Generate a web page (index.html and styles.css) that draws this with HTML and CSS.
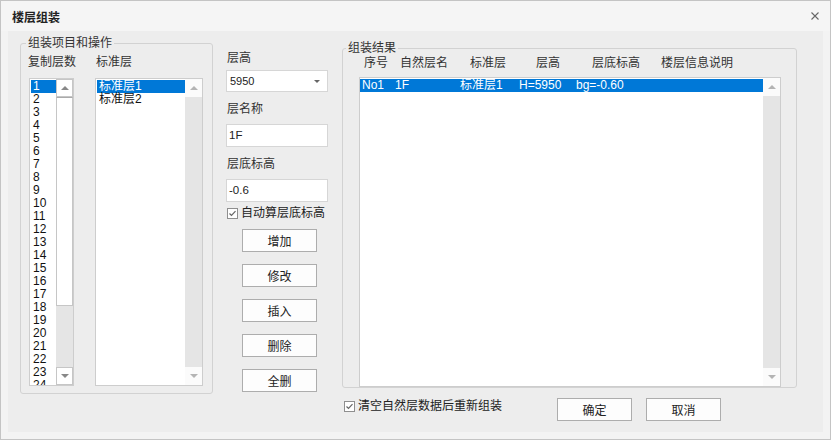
FILE: index.html
```html
<!DOCTYPE html>
<html lang="zh-CN">
<head>
<meta charset="UTF-8">
<title>楼层组装</title>
<link rel="stylesheet" href="styles.css">
</head>
<body>
<div class="dialog">
    <div class="titlebar">
        <span class="title">楼层组装</span>
        <svg class="close" width="8" height="8" viewBox="0 0 8 8"><path d="M0.5 0.5L7.5 7.5M7.5 0.5L0.5 7.5" stroke="#666" stroke-width="1.1" fill="none"/></svg>
    </div>

    <div class="panel">
        <div class="top">
            <!-- gruppo sinistro -->
            <div class="group group-left">
                <span class="legend">组装项目和操作</span>
                <div class="col-labels">
                    <span class="lab-num">复制层数</span>
                    <span>标准层</span>
                </div>
                <div class="lists">
                    <div class="listbox list-num">
                        <div class="items">
                            <div class="item sel">1</div>
                            <div class="item">2</div>
                            <div class="item">3</div>
                            <div class="item">4</div>
                            <div class="item">5</div>
                            <div class="item">6</div>
                            <div class="item">7</div>
                            <div class="item">8</div>
                            <div class="item">9</div>
                            <div class="item">10</div>
                            <div class="item">11</div>
                            <div class="item">12</div>
                            <div class="item">13</div>
                            <div class="item">14</div>
                            <div class="item">15</div>
                            <div class="item">16</div>
                            <div class="item">17</div>
                            <div class="item">18</div>
                            <div class="item">19</div>
                            <div class="item">20</div>
                            <div class="item">21</div>
                            <div class="item">22</div>
                            <div class="item">23</div>
                            <div class="item">24</div>
                        </div>
                        <div class="sbar sbar-active">
                            <div class="sbtn boxed"><span class="arr-up"></span></div>
                            <div class="thumb"></div>
                            <div class="track"></div>
                            <div class="sbtn boxed"><span class="arr-down"></span></div>
                        </div>
                    </div>
                    <div class="listbox list-std">
                        <div class="items">
                            <div class="item sel">标准层1</div>
                            <div class="item">标准层2</div>
                        </div>
                        <div class="sbar">
                            <div class="sbtn"><span class="arr-up"></span></div>
                            <div class="track"></div>
                            <div class="sbtn"><span class="arr-down"></span></div>
                        </div>
                    </div>
                </div>
            </div>

            <!-- colonna centrale -->
            <div class="mid">
                <div class="label first">层高</div>
                <div class="combo"><span>5950</span><span class="combo-arr"></span></div>
                <div class="label">层名称</div>
                <div class="field">1F</div>
                <div class="label">层底标高</div>
                <div class="field">-0.6</div>
                <div class="check check-mid">
                    <svg width="11" height="11" viewBox="0 0 11 11"><rect x="0.5" y="0.5" width="10" height="10" fill="#fff" stroke="#8f8f8f"/><path d="M2.5 5.5L4.5 7.5L8.5 3.2" stroke="#666" stroke-width="1.2" fill="none"/></svg>
                    <span>自动算层底标高</span>
                </div>
                <button class="btn first">增加</button>
                <button class="btn">修改</button>
                <button class="btn">插入</button>
                <button class="btn">删除</button>
                <button class="btn">全删</button>
            </div>

            <!-- gruppo destro -->
            <div class="group group-right">
                <span class="legend">组装结果</span>
                <div class="head">
                    <span class="h1">序号</span>
                    <span class="h2">自然层名</span>
                    <span class="h3">标准层</span>
                    <span class="h4">层高</span>
                    <span class="h5">层底标高</span>
                    <span>楼层信息说明</span>
                </div>
                <div class="listbox list-result">
                    <div class="items">
                        <div class="row sel">
                            <span>No1</span>
                            <span>1F</span>
                            <span>标准层1</span>
                            <span>H=5950</span>
                            <span>bg=-0.60</span>
                        </div>
                    </div>
                    <div class="sbar">
                        <div class="sbtn"><span class="arr-up"></span></div>
                        <div class="track"></div>
                        <div class="sbtn"><span class="arr-down"></span></div>
                    </div>
                </div>
            </div>
        </div>

        <div class="bottom">
            <div class="check check-bottom">
                <svg width="11" height="11" viewBox="0 0 11 11"><rect x="0.5" y="0.5" width="10" height="10" fill="#fff" stroke="#8f8f8f"/><path d="M2.5 5.5L4.5 7.5L8.5 3.2" stroke="#666" stroke-width="1.2" fill="none"/></svg>
                <span>清空自然层数据后重新组装</span>
            </div>
            <button class="btn">确定</button>
            <button class="btn btn-cancel">取消</button>
        </div>
    </div>
</div>
</body>
</html>
```

FILE: styles.css
```css
* {
    box-sizing: border-box;
}

body {
    margin: 0;
    font-family: "Liberation Sans", "Noto Sans CJK SC", sans-serif;
    font-size: 12px;
    color: #222;
    background: #fff;
}

.dialog {
    width: 831px;
    height: 440px;
    border: 1px solid #c4c4c4;
    background: #f3f3f3;
    display: flex;
    flex-direction: column;
}

.titlebar {
    height: 30px;
    flex: none;
    display: flex;
    align-items: center;
    justify-content: space-between;
    padding: 0 11px;
    background: #f5f5f5;
}

.title {
    font-weight: bold;
    color: #222;
}

.panel {
    flex: 1;
    margin: 0 7px 7px 7px;
    padding: 12px 0 0 12px;
    background: #ededed;
}

.top {
    display: flex;
    align-items: flex-start;
}

/* group box */
.group {
    border: 1px solid #d2d2d2;
    border-radius: 3px;
    display: flex;
    flex-direction: column;
}

.legend {
    align-self: flex-start;
    margin: -8px 0 0 5px;
    padding: 0 2px;
    line-height: 14px;
    background: #ededed;
    color: #333;
}

.group-left {
    width: 193px;
    height: 351px;
}

.group-right {
    width: 455px;
    height: 340px;
    margin: 5px 0 0 14px;
}

.group-right .legend {
    margin-left: 3px;
}

.col-labels {
    display: flex;
    margin: 4px 0 0 7px;
    line-height: 16px;
    color: #333;
}

.lab-num {
    width: 68px;
}

.lists {
    display: flex;
    margin: 8px 0 0 8px;
}

/* list box */
.listbox {
    border: 1px solid #cdcdcd;
    background: #fff;
    display: flex;
}

.list-num {
    width: 45px;
    height: 308px;
}

.list-std {
    width: 108px;
    height: 308px;
    margin-left: 21px;
}

.list-result {
    flex: 1;
    width: 422px;
    margin: 6px 0 0 16px;
}

.items {
    flex: 1;
    overflow: hidden;
    padding: 1px 0 0 1px;
}

.list-result .items {
    padding-left: 0;
}

.item {
    height: 13px;
    line-height: 13px;
    padding-left: 2px;
    white-space: nowrap;
    color: #111;
}

.sel {
    background: #0078d7;
    color: #fff;
}

.row {
    display: grid;
    grid-template-columns: 33px 65px 59px 57px auto;
    height: 13px;
    line-height: 13px;
    padding-left: 2px;
    white-space: nowrap;
}

/* scrollbar */
.sbar {
    width: 17px;
    flex: none;
    display: flex;
    flex-direction: column;
    background: #fbfbfb;
}

.sbtn {
    height: 18px;
    flex: none;
    display: flex;
    align-items: center;
    justify-content: center;
}

.sbtn.boxed {
    border: 1px solid #c6c6c6;
    background: #fff;
}

.track {
    flex: 1;
    background: #e5e5e5;
}

.thumb {
    height: 209px;
    flex: none;
    border: 1px solid #c6c6c6;
    border-top-color: #aaa;
    background: #fff;
}

.arr-up {
    width: 0;
    height: 0;
    border-left: 4px solid transparent;
    border-right: 4px solid transparent;
    border-bottom: 4px solid #b4b4b4;
}

.arr-down {
    width: 0;
    height: 0;
    border-left: 4px solid transparent;
    border-right: 4px solid transparent;
    border-top: 4px solid #b4b4b4;
}

.sbar-active .arr-up {
    border-bottom-color: #888;
}

.sbar-active .arr-down {
    border-top-color: #888;
}

/* middle column */
.mid {
    width: 102px;
    margin-left: 13px;
    padding-top: 7px;
    display: flex;
    flex-direction: column;
}

.label {
    line-height: 16px;
    padding-left: 1px;
    margin-top: 9px;
    color: #333;
}

.label.first {
    margin-top: 0;
}

.combo {
    height: 22px;
    margin-top: 4px;
    border: 1px solid #d6d6d6;
    background: #fff;
    display: flex;
    align-items: center;
    justify-content: space-between;
    padding: 0 7px 0 3px;
    font-size: 11px;
}

.combo-arr {
    width: 0;
    height: 0;
    border-left: 3px solid transparent;
    border-right: 3px solid transparent;
    border-top: 3px solid #666;
}

.field {
    height: 23px;
    margin-top: 7px;
    border: 1px solid #d6d6d6;
    background: #fff;
    padding: 0 2px;
    line-height: 21px;
    font-size: 11.5px;
}

.check {
    display: flex;
    align-items: center;
    gap: 3px;
    color: #222;
}

.check svg {
    flex: none;
}

.check-mid {
    margin-top: 3px;
    padding-left: 1px;
    line-height: 16px;
}

.btn {
    width: 75px;
    height: 23px;
    padding: 0;
    border: 1px solid #adadad;
    background: #fdfdfd;
    font: inherit;
    color: #222;
}

.mid .btn {
    margin: 12px 0 0 16px;
}

.mid .btn.first {
    margin-top: 8px;
}

/* result header */
.head {
    display: flex;
    padding-left: 21px;
    line-height: 16px;
    color: #333;
    white-space: nowrap;
}

.h1 { width: 36px; }
.h2 { width: 70px; }
.h3 { width: 66px; }
.h4 { width: 56px; }
.h5 { width: 69px; }

/* bottom row */
.bottom {
    display: flex;
    align-items: flex-start;
    margin: 4px 0 0 324px;
}

.check-bottom {
    width: 213px;
    margin-top: 2px;
    line-height: 12px;
}

.btn-cancel {
    margin-left: 14px;
}
```
